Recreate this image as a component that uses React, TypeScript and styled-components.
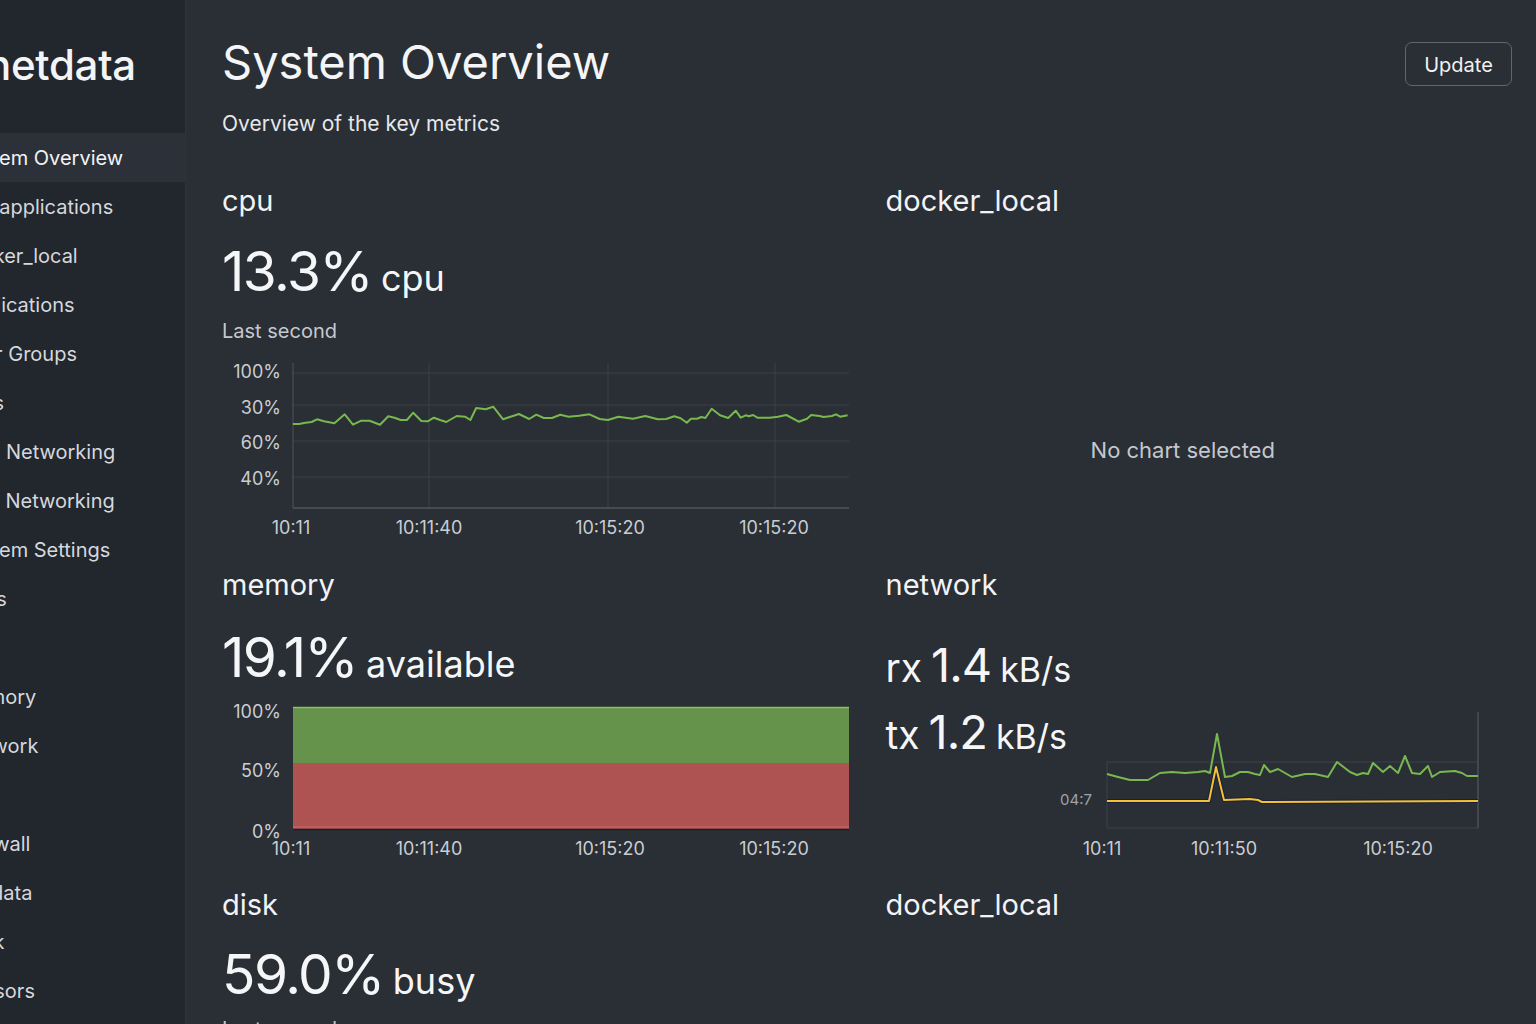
import React from 'react';
import styled, { createGlobalStyle } from 'styled-components';

const Global = createGlobalStyle`
  html, body { margin: 0; padding: 0; background: #2a2e35; }
  body {
    font-family: Inter, "Noto Sans", "Liberation Sans", sans-serif;
    color: #eef0f3;
    overflow: hidden;
  }
  * { box-sizing: border-box; }
`;

const Shell = styled.div`
  display: grid;
  grid-template-columns: 186px 1fr;
  height: 1024px;
  overflow: hidden;
`;

const Sidebar = styled.aside`
  background: #22262d;
  border-right: 1px solid #2e3239;
  overflow: hidden;
  display: flex;
  flex-direction: column;
`;

const Logo = styled.div`
  font-size: 42px;
  font-weight: 500;
  letter-spacing: -0.3px;
  color: #f3f4f6;
  line-height: 50px;
  margin: 40px 0 0 -14px;
  white-space: nowrap;
`;

const NavList = styled.nav`
  margin-top: 43px;
  display: flex;
  flex-direction: column;
`;

const NavItem = styled.div<{ $active?: boolean }>`
  height: 49px;
  display: flex;
  align-items: center;
  font-size: 20px;
  white-space: nowrap;
  color: ${(p) => (p.$active ? '#f2f4f6' : '#d5d8dd')};
  background: ${(p) => (p.$active ? '#2c3038' : 'transparent')};
`;

const NavLabel = styled.span`
  margin-left: -42px;
`;

const Main = styled.main`
  padding: 32px 24px 0 36px;
  display: flex;
  flex-direction: column;
  min-width: 0;
`;

const Header = styled.header`
  display: flex;
  justify-content: space-between;
  align-items: flex-start;
`;

const TitleBlock = styled.div`
  display: flex;
  flex-direction: column;
`;

const Title = styled.h1`
  margin: 0;
  font-size: 47px;
  line-height: 60px;
  font-weight: 400;
  color: #f4f5f7;
`;

const Subtitle = styled.p`
  margin: 18px 0 0;
  font-size: 21px;
  line-height: 28px;
  color: #e6e8eb;
`;

const UpdateButton = styled.button`
  margin-top: 10px;
  width: 107px;
  height: 44px;
  border: 1px solid #62666d;
  border-radius: 7px;
  background: transparent;
  color: #f0f2f4;
  font-family: inherit;
  font-size: 20px;
  padding-top: 3px;
`;

const Grid = styled.div`
  margin-top: 44px;
  display: grid;
  grid-template-columns: 1fr 1fr;
  column-gap: 37px;
  row-gap: 21px;
`;

const Panel = styled.section`
  display: flex;
  flex-direction: column;
  min-width: 0;
`;

const PanelTitle = styled.h2`
  margin: 0;
  font-size: 29px;
  line-height: 38px;
  font-weight: 400;
  color: #f1f3f5;
`;

const BigValue = styled.div<{ $gap: number }>`
  margin-top: ${(p) => p.$gap}px;
  height: 64px;
  font-size: 55px;
  letter-spacing: -1.5px;
  line-height: 64px;
  color: #f5f6f8;
  white-space: nowrap;
`;

const Unit = styled.span`
  font-size: 36px;
  letter-spacing: 0;
  line-height: 1;
  margin-left: 9px;
`;

const Caption = styled.div<{ $gap: number }>`
  margin-top: ${(p) => p.$gap}px;
  font-size: 20px;
  line-height: 26px;
  color: #c5c9cf;
`;

const EmptyState = styled.div`
  flex: 1;
  display: flex;
  align-items: center;
  justify-content: center;
  padding: 134px 32px 0 0;
  font-size: 22px;
  color: #c4c8ce;
`;

const NetBody = styled.div`
  display: flex;
  align-items: flex-start;
`;

const NetValues = styled.div`
  width: 164px;
  flex: none;
  padding-top: 37px;
  display: flex;
  flex-direction: column;
  gap: 3px;
`;

const NetLine = styled.div`
  height: 64px;
  line-height: 64px;
  white-space: nowrap;
  color: #f5f6f8;
`;

const NetPrefix = styled.span`
  font-size: 39px;
  line-height: 1;
`;

const NetNumber = styled.span`
  font-size: 47px;
  letter-spacing: -1px;
  line-height: 1;
  margin-left: 9px;
`;

const NetUnit = styled.span`
  font-size: 34px;
  line-height: 1;
  margin-left: 9px;
`;

const Plot = styled.svg<{ $gap: number }>`
  display: block;
  flex: none;
  margin-top: ${(p) => p.$gap}px;
  overflow: visible;
  text {
    font-family: Inter, "Noto Sans", sans-serif;
    font-size: 18px;
    fill: #c9cdd2;
  }
  .small {
    font-size: 15px;
    fill: #9ea3aa;
  }
`;

/* ---------- chart data ---------- */

const cpuRaw: [number, number][] = [
  [200, 222], [215, 222], [230, 218], [245, 216], [258, 208], [275, 214], [300, 220], [325, 193],
  [345, 224], [365, 212], [385, 212], [410, 224], [430, 199], [445, 203], [460, 210], [475, 210],
  [490, 188], [510, 213], [525, 214], [540, 203], [555, 210], [570, 216], [595, 198], [615, 200],
  [628, 210], [642, 174], [665, 178], [683, 170], [707, 208], [725, 200], [745, 192], [770, 207],
  [787, 194], [805, 204], [825, 204], [845, 194], [865, 200], [890, 197], [915, 193], [940, 207],
  [960, 210], [985, 200], [1020, 206], [1050, 198], [1080, 208], [1100, 207], [1120, 199],
  [1135, 205], [1150, 218], [1160, 206], [1175, 206], [1185, 201], [1195, 204], [1210, 176],
  [1230, 196], [1250, 204], [1268, 182], [1280, 203], [1292, 196], [1300, 199], [1310, 195],
  [1320, 203], [1350, 203], [1370, 200], [1390, 195], [1420, 215], [1440, 206], [1450, 195],
  [1470, 198], [1480, 201], [1500, 198], [1510, 193], [1520, 200], [1538, 196],
];

const cpuPoints = cpuRaw
  .map(([x, y]) => `${(x / 2.412 - 12).toFixed(1)},${(y / 3 - 5).toFixed(1)}`)
  .join(' ');

const netGreenRaw: [number, number][] = [
  [1107, 774], [1118, 777], [1130, 780], [1148, 780], [1160, 773], [1172, 772], [1185, 773],
  [1198, 772], [1205, 771], [1210, 773], [1217, 734], [1225, 777], [1232, 776], [1240, 772],
  [1248, 772], [1255, 774], [1260, 775], [1264, 765], [1270, 772], [1278, 769], [1292, 777],
  [1305, 774], [1315, 774], [1328, 777], [1337, 762], [1350, 772], [1357, 775], [1363, 773],
  [1368, 774], [1373, 763], [1383, 772], [1390, 766], [1398, 773], [1405, 756], [1412, 773],
  [1420, 774], [1428, 766], [1432, 777], [1440, 772], [1455, 771], [1462, 773], [1467, 776],
  [1478, 776],
];
const netYellowRaw: [number, number][] = [
  [1107, 801], [1209, 801], [1216, 767], [1224, 800], [1250, 799], [1258, 800], [1262, 802],
  [1478, 801],
];
const toNet = (pts: [number, number][]) =>
  pts.map(([x, y]) => `${x - 1050},${y - 700}`).join(' ');

const xTicks: [number, string][] = [
  [69, '10:11'],
  [207, '10:11:40'],
  [388, '10:15:20'],
  [552, '10:15:20'],
];

const CpuChart = () => (
  <Plot $gap={11} width={627} height={190} viewBox="0 0 627 190">
    {[18, 50, 86, 122].map((y) => (
      <line key={y} x1={71} x2={627} y1={y} y2={y} stroke="#3b3f46" strokeWidth={1} />
    ))}
    {[207, 386, 553].map((x) => (
      <line key={x} x1={x} x2={x} y1={8} y2={153} stroke="#3b3f46" strokeWidth={1} />
    ))}
    <line x1={71} x2={71} y1={8} y2={153} stroke="#50545b" strokeWidth={1} />
    <line x1={71} x2={627} y1={153} y2={153} stroke="#50545b" strokeWidth={1.5} />
    {[
      [16, '100%'],
      [52, '30%'],
      [87, '60%'],
      [123, '40%'],
    ].map(([y, t]) => (
      <text key={t as string} x={59} y={y as number} textAnchor="end" dominantBaseline="central">
        {t}
      </text>
    ))}
    {xTicks.map(([x, t], i) => (
      <text key={i} x={x} y={172} textAnchor="middle" dominantBaseline="central">
        {t}
      </text>
    ))}
    <polyline points={cpuPoints} fill="none" stroke="#78b84e" strokeWidth={2} strokeLinejoin="round" />
  </Plot>
);

const MemoryChart = () => (
  <Plot $gap={6} width={627} height={162} viewBox="0 0 627 162">
    <rect x={71} y={12} width={556} height={56} fill="#65934b" />
    <rect x={71} y={68} width={556} height={66} fill="#ae5252" />
    <line x1={71} x2={627} y1={12.5} y2={12.5} stroke="#8cc456" strokeWidth={1.5} />
    <line x1={71} x2={627} y1={132} y2={132} stroke="#c86a6a" strokeWidth={1} />
    <line x1={71} x2={627} y1={134.5} y2={134.5} stroke="#1e2126" strokeWidth={1.5} />
    {[
      [16, '100%'],
      [75, '50%'],
      [136, '0%'],
    ].map(([y, t]) => (
      <text key={t as string} x={59} y={y as number} textAnchor="end" dominantBaseline="central">
        {t}
      </text>
    ))}
    {xTicks.map(([x, t], i) => (
      <text key={i} x={x} y={153} textAnchor="middle" dominantBaseline="central">
        {t}
      </text>
    ))}
  </Plot>
);

const NetworkChart = () => (
  <Plot $gap={96} width={462} height={165} viewBox="0 0 462 165">
    <rect x={57} y={62} width={371} height={66} fill="none" stroke="#3d4148" strokeWidth={1} />
    <line x1={428} x2={428} y1={12} y2={128} stroke="#4a4e55" strokeWidth={1.5} />
    <text className="small" x={42} y={99} textAnchor="end" dominantBaseline="central">
      04:7
    </text>
    {[
      [52, '10:11'],
      [174, '10:11:50'],
      [348, '10:15:20'],
    ].map(([x, t], i) => (
      <text key={i} x={x as number} y={148} textAnchor="middle" dominantBaseline="central">
        {t}
      </text>
    ))}
    <polyline points={toNet(netYellowRaw)} fill="none" stroke="#1b1e3a" strokeWidth={4} strokeLinejoin="round" />
    <polyline points={toNet(netYellowRaw)} fill="none" stroke="#f2c230" strokeWidth={2} strokeLinejoin="round" />
    <polyline points={toNet(netGreenRaw)} fill="none" stroke="#78b84e" strokeWidth={2} strokeLinejoin="round" />
  </Plot>
);

const navItems: (string | null)[] = [
  'System Overview',
  'Top applications',
  'docker_local',
  'Applications',
  'User Groups',
  'Logs',
  'IPv4 Networking',
  'IPv6 Networking',
  'System Settings',
  'Apps',
  null,
  'Memory',
  'Network',
  null,
  'Firewall',
  'Netdata',
  'Rack',
  'Sensors',
];

export default function App() {
  return (
    <>
      <Global />
      <Shell>
        <Sidebar>
          <Logo>netdata</Logo>
          <NavList>
            {navItems.map((label, i) => (
              <NavItem key={i} $active={i === 0}>
                {label && <NavLabel>{label}</NavLabel>}
              </NavItem>
            ))}
          </NavList>
        </Sidebar>
        <Main>
          <Header>
            <TitleBlock>
              <Title>System Overview</Title>
              <Subtitle>Overview of the key metrics</Subtitle>
            </TitleBlock>
            <UpdateButton>Update</UpdateButton>
          </Header>
          <Grid>
            <Panel>
              <PanelTitle>cpu</PanelTitle>
              <BigValue $gap={19}>
                13.3%<Unit>cpu</Unit>
              </BigValue>
              <Caption $gap={15}>Last second</Caption>
              <CpuChart />
            </Panel>
            <Panel>
              <PanelTitle>docker_local</PanelTitle>
              <EmptyState>No chart selected</EmptyState>
            </Panel>
            <Panel>
              <PanelTitle>memory</PanelTitle>
              <BigValue $gap={21}>
                19.1%<Unit>available</Unit>
              </BigValue>
              <MemoryChart />
            </Panel>
            <Panel>
              <PanelTitle>network</PanelTitle>
              <NetBody>
                <NetValues>
                  <NetLine>
                    <NetPrefix>rx</NetPrefix>
                    <NetNumber>1.4</NetNumber>
                    <NetUnit>kB/s</NetUnit>
                  </NetLine>
                  <NetLine>
                    <NetPrefix>tx</NetPrefix>
                    <NetNumber>1.2</NetNumber>
                    <NetUnit>kB/s</NetUnit>
                  </NetLine>
                </NetValues>
                <NetworkChart />
              </NetBody>
            </Panel>
            <Panel>
              <PanelTitle>disk</PanelTitle>
              <BigValue $gap={18}>
                59.0%<Unit>busy</Unit>
              </BigValue>
              <Caption $gap={10}>Last second</Caption>
            </Panel>
            <Panel>
              <PanelTitle>docker_local</PanelTitle>
            </Panel>
          </Grid>
        </Main>
      </Shell>
    </>
  );
}
